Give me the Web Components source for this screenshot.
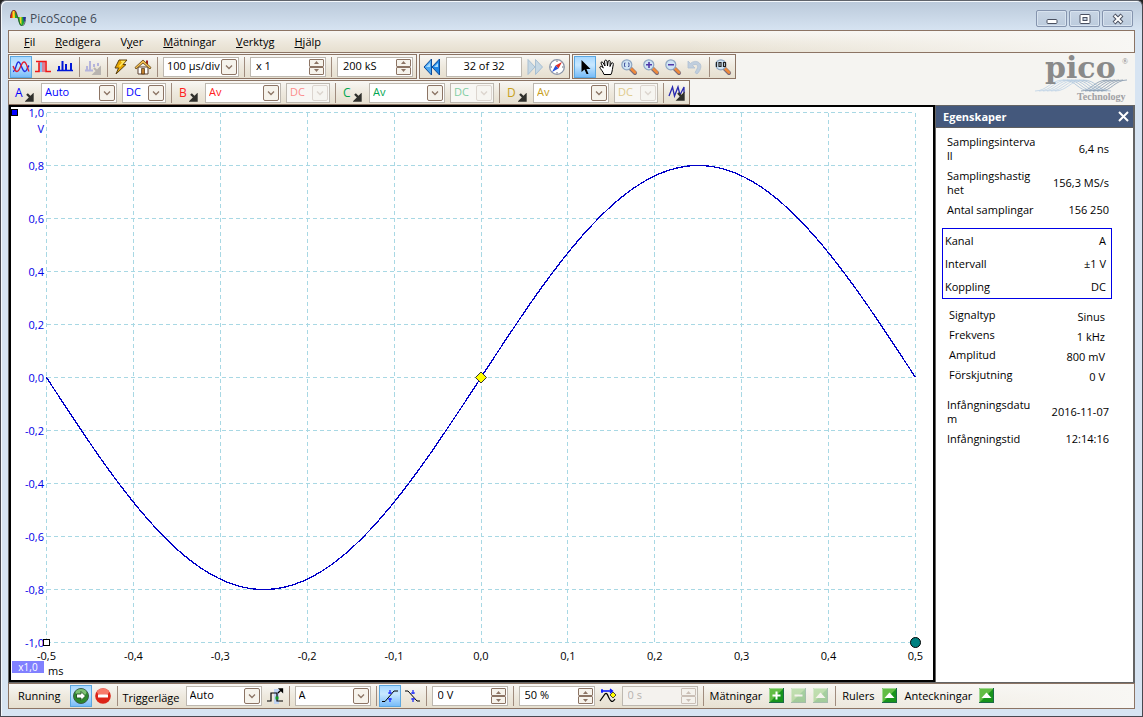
<!DOCTYPE html>
<html lang="sv">
<head>
<meta charset="utf-8">
<title>PicoScope 6</title>
<style>
html, body { height: 100%; }
body { margin: 0; overflow: hidden; background: #222; font: 11px/14px "Open Sans", "Noto Sans", sans-serif; color: #000; }
</style>
</head>
<body>
<scope-window>
  <title-bar slot="title">PicoScope 6</title-bar>
  <menu-bar slot="menu"></menu-bar>

  <tool-bar slot="row1">
    <icon-button icon="scope" label="Oscilloskop" selected></icon-button>
    <icon-button icon="pulse" label="Persistens"></icon-button>
    <icon-button icon="bars" label="Spektrum"></icon-button>
    <tool-sep></tool-sep>
    <icon-button icon="barsoff" label="Spektrumalternativ" disabled></icon-button>
    <tool-sep></tool-sep>
    <icon-button icon="bolt" label="Autokonfiguration"></icon-button>
    <icon-button icon="home" label="Hem"></icon-button>
    <tool-sep></tool-sep>
    <combo-box label="Tidbas" value="100 µs/div"></combo-box>
    <tool-sep></tool-sep>
    <spin-box label="Zoom" value="x 1"></spin-box>
    <tool-sep></tool-sep>
    <spin-box label="Samplingar" value="200 kS"></spin-box>
  </tool-bar>
  <tool-bar slot="row1">
    <icon-button icon="rewind" label="Föregående buffert"></icon-button>
    <spin-box label="Buffert" value="32 of 32" plain></spin-box>
    <icon-button icon="forward" label="Nästa buffert"></icon-button>
    <icon-button icon="compass" label="Buffertöversikt"></icon-button>
  </tool-bar>
  <tool-bar slot="row1">
    <icon-button icon="pointer" label="Markera" selected></icon-button>
    <icon-button icon="hand" label="Hand"></icon-button>
    <icon-button icon="zoomsel" label="Zooma markering"></icon-button>
    <icon-button icon="zoomin" label="Zooma in"></icon-button>
    <icon-button icon="zoomout" label="Zooma ut"></icon-button>
    <icon-button icon="undo" label="Ångra zoom" disabled></icon-button>
    <tool-sep></tool-sep>
    <icon-button icon="zoomfull" label="Full vy"></icon-button>
  </tool-bar>

  <tool-bar slot="row2">
    <channel-group name="A" color="#0000ff" range="Auto" coupling="DC"></channel-group>
    <tool-sep></tool-sep>
    <channel-group name="B" color="#ff2020" range="Av" coupling="DC" off></channel-group>
    <tool-sep></tool-sep>
    <channel-group name="C" color="#00a650" range="Av" coupling="DC" off></channel-group>
    <tool-sep></tool-sep>
    <channel-group name="D" color="#c8a020" range="Av" coupling="DC" off></channel-group>
    <tool-sep></tool-sep>
    <icon-button icon="generator" label="Signalgenerator"></icon-button>
  </tool-bar>

  <pico-logo slot="logo"></pico-logo>

  <scope-view slot="main"></scope-view>
  <side-panel slot="main" heading="Egenskaper">
    <prop-table kind="wrap" rows='[["Samplingsintervall","6,4 ns"],["Samplingshastighet","156,3 MS/s"],["Antal samplingar","156 250"]]'></prop-table>
    <prop-table kind="boxed" rows='[["Kanal","A"],["Intervall","±1 V"],["Koppling","DC"]]'></prop-table>
    <prop-table kind="signal" rows='[["Signaltyp","Sinus"],["Frekvens","1 kHz"],["Amplitud","800 mV"],["Förskjutning","0 V"]]'></prop-table>
    <prop-table kind="wrap" rows='[["Infångningsdatum","2016-11-07"],["Infångningstid","12:14:16"]]'></prop-table>
  </side-panel>

  <tool-bar slot="bottom" fill>
    <tool-label wide>Running</tool-label>
    <icon-button icon="run" label="Start" selected></icon-button>
    <icon-button icon="stop" label="Stopp"></icon-button>
    <tool-sep></tool-sep>
    <tool-label low>Triggerläge</tool-label>
    <combo-box label="Triggerläge" value="Auto"></combo-box>
    <icon-button icon="trigger" label="Avancerad trigger"></icon-button>
    <tool-sep></tool-sep>
    <combo-box label="Triggerkanal" value="A"></combo-box>
    <tool-sep></tool-sep>
    <icon-button icon="rising" label="Stigande flank" selected></icon-button>
    <icon-button icon="falling" label="Fallande flank"></icon-button>
    <tool-sep></tool-sep>
    <spin-box label="Tröskel" value="0 V"></spin-box>
    <tool-sep></tool-sep>
    <spin-box label="Pretrigger" value="50 %"></spin-box>
    <icon-button icon="delay" label="Fördröjning efter trigger"></icon-button>
    <spin-box label="Fördröjning" value="0 s" disabled></spin-box>
    <tool-sep></tool-sep>
    <tool-label>Mätningar</tool-label>
    <icon-button icon="plus" label="Lägg till mätning"></icon-button>
    <icon-button icon="minus" label="Ta bort mätning" disabled></icon-button>
    <icon-button icon="up" label="Redigera mätning" disabled></icon-button>
    <tool-sep></tool-sep>
    <tool-label>Rulers</tool-label>
    <icon-button icon="up" label="Visa linjaler"></icon-button>
    <tool-label>Anteckningar</tool-label>
    <icon-button icon="up" label="Visa anteckningar"></icon-button>
  </tool-bar>
</scope-window>

<script>
const ARROW = '<path d="M9 8l4 4M14.500 9.500v5h-5z" fill="#30302c" stroke="#30302c" stroke-width="2.400"/>';
const lens = inner => `<path d="M9.500 9.500l4.500 4.500" stroke="#7a6a78" stroke-width="4" stroke-linecap="round"/><path d="M10 9.500l4 4" stroke="#f08a3c" stroke-width="2.500" stroke-linecap="round"/><circle cx="5.800" cy="5.800" r="5" fill="#cfe4f4" stroke="#8fa6c2" stroke-width="1.200"/>${inner}`;
const green = inner => `<rect x=".5" y=".5" width="14" height="14" fill="#18941c" stroke="#1c6a48"/><path d="M1 14V1h13L1 14z" fill="#62bd45"/><path d="M.5 14V.5H14" fill="none" stroke="#9fd890"/>${inner}`;
const ICONS = {
  scope: '<path d="M0 12.500C3 12.500 3 3 5.500 3S9 12.500 12 12.500c2 0 2-4 4-6" fill="none" stroke="#2030e0" stroke-width="1.400"/><path d="M0 7c1 2 2 5.500 4 5.500C7 12.500 8 3 11 3s3 6 5 9.500" fill="none" stroke="#e02030" stroke-width="1.400"/>',
  pulse: '<path d="M4 3h3v10H4z" fill="#80c8f8"/><path d="M7 3h3v10H7z" fill="#d88098"/><path d="M0 12.500h4V3.500M1 2.500h10v10h5" fill="none" stroke="#f01818" stroke-width="1.600"/>',
  bars: '<path d="M0 11.500h16" stroke="#0018d8" stroke-width="1.500"/><path d="M2 12V7M5.500 12V2M9 12V5M14 12V4" stroke="#0018d8" stroke-width="2" fill="none"/>',
  barsoff: '<path d="M0 11.500h8M2 12V7M5 12V2M9 8V5M13 7V4" stroke="#b4b4dc" stroke-width="2" fill="none"/><path d="M9 9l4 4M15 9v6H9z" fill="#b8b4b0" stroke="#b8b4b0" stroke-width="2"/>',
  bolt: '<path d="M6 1h8l-4 4.500h3L3 15l2.500-6H2z" fill="#e8a800" stroke="#5a4010"/><path d="M8 2.500h3L6.500 7.500" fill="none" stroke="#ffe860" stroke-width="1.500"/>',
  home: '<path d="M11 1.500h2V6h-2z" fill="#a02020"/><path d="M3 8h10v7H3z" fill="#fff" stroke="#5a4030"/><path d="M0 8.500l8-7.500 8 7.500-1 1.500-7-6-7 6z" fill="#f4c050" stroke="#5a3c10" stroke-width=".8"/><path d="M6.500 9.500h3V15h-3z" fill="#c08030" stroke="#503010" stroke-width=".7"/>',
  rewind: '<path d="M7.500 0v16L0 8z" fill="#4ba6f0" stroke="#0c4c9c"/><path d="M15.500 0v16L8 8z" fill="#1f86e4" stroke="#0c4c9c"/><path d="M6 4v4H2zM14 4v4h-4z" fill="#a8dcff"/>',
  forward: '<path d="M1 .5v15L8 8zM8.500.5v15L15.500 8z" fill="#c6d8e4" stroke="#a8bfd2"/>',
  compass: '<circle cx="8" cy="8" r="7.300" fill="#fff" stroke="#8a94a8" stroke-width="1.300"/><path d="M13 3L9.500 9.500l-3-3z" fill="#e03028"/><path d="M3 13l3.500-6.500 3 3z" fill="#2850d8"/><path d="M8 1.500V3M8 13v1.500M1.500 8H3M13 8h1.500" stroke="#667"/>',
  pointer: '<path d="M4.500 1v12l3-2.500 2 4.500h2l-2-5h4z" fill="#000"/>',
  hand: '<path d="M5 15.500C4 12 1 10 .8 8c1-1.500 2.500 0 3.500 1L2 4C2 2.500 3.500 2.500 4.200 4L6 7 5.500 2C6 .8 7.500.8 8 2l.5 5 .7-5c1-1 2-.5 2 .7L11 7.500 12.500 4c1.500-.8 2 .5 1.800 1.500-.8 3-.8 7-2.300 10z" fill="#fff" stroke="#000"/>',
  zoomsel: lens('<path d="M4 3.500v1M4 7v1M7.500 3.500v1M7.500 7v1M3.500 4v3.500M8 4v3.500" stroke="#4858a0" fill="none"/>'),
  zoomin: lens('<path d="M3 5.800h6M6 3v6" stroke="#5038a8" stroke-width="1.600"/>'),
  zoomout: lens('<path d="M3 5.800h6" stroke="#5038a8" stroke-width="1.600"/>'),
  zoomfull: lens('<path d="M1.500 3v5M4 3.500h2v4H4zM8.500 3.500h2v4h-2z" fill="none" stroke="#222" stroke-width="1.200"/>'),
  undo: '<path d="M1 2v7h7L5.500 6.500C9 4 12 6 10 10l-2 3.500 2 1.500C15 10 15 5 11 3 8 1.500 5 3 3.500 4.500z" fill="#c0cede" stroke="#aebfd2" stroke-width=".8"/>',
  generator: '<path d="M0 11l3.500-9 2 9L9 2l2 8 4-8v6" fill="none" stroke="#2828b0" stroke-width="1.300"/>' + ARROW,
  run: '<circle cx="8" cy="8" r="7.500" fill="#2c8a2c" stroke="#3c5a4a"/><ellipse cx="8" cy="4.500" rx="5.500" ry="3.500" fill="#9cd890" opacity=".7"/><path d="M3.500 6H8V3.500L12.500 8 8 12.500V10H3.500z" fill="#fff" stroke="#205020" stroke-width=".9"/>',
  stop: '<circle cx="8" cy="8" r="7.800" fill="#dc2418"/><ellipse cx="8" cy="4" rx="6" ry="3.500" fill="#ff9080" opacity=".8"/><path d="M3 6.500h10v3H3z" fill="#fff"/>',
  trigger: '<path d="M7 1h5v15H7z" fill="#c0d4f4"/><path d="M0 13h4V5h6v8h6" fill="none" stroke="#000" stroke-width="1.200"/><path d="M11 5l3-3M12.500 1h3v3z" stroke="#000" stroke-width="1.300"/><path d="M8.500 8.500h3v3h-3z" fill="#10a020"/>',
  rising: '<path d="M0 13.500h3L12 3h4" fill="none" stroke="#000"/><path d="M8 2v4M8 10v4M6 5h4M6 11h4" stroke="#1020ff" stroke-width="1.200"/>',
  falling: '<path d="M1 3h3l9 10h3" fill="none" stroke="#000"/><path d="M9 2v4M9 10v4M7 5h4M7 11h4" stroke="#1020ff" stroke-width="1.200"/>',
  delay: '<path d="M0 13L5 6c2-2 3 2 4 4s3 6 6 1" fill="none" stroke="#000" stroke-width="1.200"/><path d="M1 3h11M2 1v4M10 1l2.500 2L10 5" fill="none" stroke="#0010ff" stroke-width="1.300"/><path d="M13 4l3 3-3 3-3-3z" fill="#ff0" stroke="#222" stroke-width=".8"/>',
  plus: green('<path d="M3.500 7.500h8M7.500 3.500v8" stroke="#fff" stroke-width="2"/>'),
  minus: green('<path d="M3.500 7.500h8" stroke="#fff" stroke-width="2"/>'),
  up: green('<path d="M2.500 10l5-5.500 5 5.500z" fill="#fff"/>')
};

/* Shared base: stamps styles and markup into an open shadow root. */
class Part extends HTMLElement {
  connectedCallback() {
    if (this.shadowRoot) return;
    const t = document.createElement('template');
    t.innerHTML = `<style>*{box-sizing:border-box}${this.css()}</style>${this.html()}`;
    this.attachShadow({ mode: 'open' }).append(t.content.cloneNode(true));
    this.ready();
  }
  at(n) { return this.getAttribute(n) || ''; }
  has(n) { return this.hasAttribute(n); }
  ready() {}
}
const BAR = 'linear-gradient(#f8f7f4,#eee9de 50%,#e6dfcf)';

customElements.define('scope-window', class extends Part {
  css() { return `
    :host{display:flex;flex-direction:column;box-sizing:border-box;height:100vh;padding:0 7px 7px;border:1px solid #484850;border-top-color:#60646c;border-radius:6px 6px 0 0;background:#d7e4f2 linear-gradient(#bac9da,#d7e4f2) 0 0/100% 30px no-repeat;box-shadow:inset 1px 1px #f4f8fc;overflow:hidden}
    .tools{flex:none;display:flex;justify-content:space-between;background:#f5f4f1;padding-top:1px}
    .rows{display:flex;flex-direction:column;gap:1px}
    .row{display:flex;gap:2px}
    main{flex:1 1 0;min-height:0;display:flex;border:solid #646464;border-width:0 2px 1px 1px;background:#fff}
    ::slotted(scope-view){flex:1}`; }
  html() { return `<slot name="title"></slot><slot name="menu"></slot>
    <div class="tools"><div class="rows"><div class="row"><slot name="row1"></slot></div><div class="row"><slot name="row2"></slot></div></div><slot name="logo"></slot></div>
    <main><slot name="main"></slot></main><slot name="bottom"></slot>`; }
});

customElements.define('title-bar', class extends Part {
  css() { return `
    :host{display:flex;flex:none;align-items:center;height:29px;padding-left:2px;color:#444c58;font-size:12px}
    .logo{width:16px;height:16px;margin:4px 4px 0 0}
    .t{flex:1;padding-top:6px}
    .c{display:flex;gap:2px;padding:6px 2px 0 0}
    button{width:31px;height:17px;padding:0;border:1px solid #8594ae;border-radius:2px;background:linear-gradient(#c8d5e4,#bccbdd);box-shadow:inset 0 0 0 1px #d8e3ef;display:grid;place-items:center}`; }
  html() {
    const b = (l, p) => `<button aria-label="${l}"><svg width="14" height="12" viewBox="0 0 14 12">${p}</svg></button>`;
    return `<svg class="logo" viewBox="0 0 16 16"><path d="M0 8c1-5 2-8 4-8s3 4 4 8z" fill="#e02818"/><path d="M2.500 8V1h2L5 8z" fill="#f4e020"/><path d="M5 8V1l3 7z" fill="#20a030"/><path d="M7.500 7h8c-1 5-2 9-4 9s-3-4-4-9z" fill="#20a838"/><path d="M9.500 7h2v8l-1.500-2z" fill="#f0d820"/><path d="M13 7h3l-2 6z" fill="#2030a0"/><path d="M0 8c1-5 2-8 4-8s3 5 4 8 2 8 4 8 3-3 4-8" fill="none" stroke="#333" stroke-width=".7"/></svg>
    <div class="t"><slot></slot></div><div class="c">
    ${b('Minimera', '<rect x="2" y="6.500" width="10" height="4" rx="1" fill="#fff" stroke="#4a5060"/>')}
    ${b('Maximera', '<rect x="2" y="1.500" width="10" height="9" rx="1" fill="#fff" stroke="#4a5060"/><rect x="5" y="4.500" width="4" height="3" fill="#c4d0e0" stroke="#4a5060"/>')}
    ${b('Stäng', '<path d="M3 2l8 8M11 2l-8 8" stroke="#4a5060" stroke-width="4"/><path d="M3.500 2.500l7 7M10.500 2.500l-7 7" stroke="#fff" stroke-width="2"/>')}</div>`; }
});

customElements.define('menu-bar', class extends Part {
  css() { return `
    :host{display:block;flex:none;border:1px solid #8c7464;background:linear-gradient(90deg,transparent 60%,#f8f7f4),${BAR}}
    nav{display:flex;gap:20px;height:21px;padding-left:15px}
    button{border:0;padding:0;background:none;font:inherit;font-size:11px;color:#000}`; }
  html() { return `<nav><button><u>F</u>il</button><button><u>R</u>edigera</button><button>V<u>y</u>er</button><button><u>M</u>ätningar</button><button><u>V</u>erktyg</button><button><u>H</u>jälp</button></nav>`; }
});

customElements.define('tool-bar', class extends Part {
  css() { return `
    :host{display:flex;flex:none;align-items:center;box-sizing:border-box;height:25px;padding:0 1px;border:1px solid #8c7464;background:${BAR}}
    :host([fill]){height:26px;background:linear-gradient(90deg,transparent 60%,#f8f7f4),${BAR}}`; }
  html() { return '<slot></slot>'; }
});

customElements.define('tool-sep', class extends Part {
  css() { return ':host{display:block;flex:none;width:1px;height:20px;margin:0 2px 0 3px;background:#a08c7e}'; }
  html() { return ''; }
});

customElements.define('tool-label', class extends Part {
  css() { return ':host{display:block;flex:none;padding:0 4px}:host([wide]){padding:0 9px 0 8px}:host([low]){padding:3px 3px 0 3px}'; }
  html() { return '<slot></slot>'; }
});

customElements.define('icon-button', class extends Part {
  css() { return `
    :host{display:block;flex:none}
    button{display:grid;place-items:center;width:22px;height:22px;padding:0;border:1px solid transparent;background:none}
    :host([selected]) button{border-color:#5ba7e0;background:linear-gradient(#a8d8ff,#c8e8ff 40%,#78bcf8)}
    :host([disabled]) svg{opacity:.35}
    :host([icon=undo]) svg,:host([icon=barsoff]) svg{opacity:1}
    svg{width:16px;height:16px;overflow:visible}`; }
  html() { return `<button aria-label="${this.at('label')}"${this.has('disabled') ? ' disabled' : ''}><svg viewBox="0 0 16 16">${ICONS[this.at('icon')]}</svg></button>`; }
});

customElements.define('combo-box', class extends Part {
  css() { return `
    :host{display:grid;flex:none;box-sizing:border-box;width:76px;height:20px;margin:0 2px 0 3px;border:1px solid #bdb8b0;background:#fff}
    :host([small]){width:44px}
    :host([disabled]){background:#f8f7f4}
    :host([disabled]) *{opacity:.5}
    select{grid-area:1/1;min-width:0;width:100%;height:18px;appearance:none;border:0;padding:0 0 2px 3px;background:none;font:inherit;font-size:11px;color:inherit;outline:0;opacity:1}
    svg{grid-area:1/1;justify-self:end;align-self:center;width:16px;height:16px;margin-right:1px;pointer-events:none}`; }
  html() { return `<select aria-label="${this.at('label')}"${this.has('disabled') ? ' disabled' : ''}><option>${this.at('value')}</option></select>
    <svg viewBox="0 0 16 16"><rect x=".5" y=".5" width="15" height="15" rx="1.500" fill="#f6f3ec" stroke="#8c7464"/><path d="M5 6.500l3 3 3-3" fill="none" stroke="#8c7464" stroke-width="1.300"/></svg>`; }
});

customElements.define('spin-box', class extends Part {
  css() { return `
    :host{display:flex;align-items:center;flex:none;box-sizing:border-box;width:76px;height:20px;margin:0 2px 0 3px;border:1px solid #bdb8b0;background:#fff}
    input{flex:1;min-width:0;height:18px;border:0;padding:0 0 3px 5px;background:none;font:inherit;font-size:11px;color:#000;outline:0}
    :host([plain]) input{text-align:center;padding:0 0 3px}
    :host([plain]) .b{display:none}
    :host([disabled]){background:#f4f2ee}
    :host([disabled]) input{color:#b8b4b0}
    :host([disabled]) .b{opacity:.4}
    .b{display:flex;flex-direction:column;margin-right:1px}
    button{display:grid;place-items:center;width:15px;height:8px;padding:0;border:1px solid #8c7464;border-radius:1px;background:#f6f3ec}
    svg{width:5px;height:3px}`; }
  html() {
    const d = this.has('disabled') ? ' disabled' : '';
    return `<input type="text" aria-label="${this.at('label')}" value="${this.at('value')}"${d}><div class="b">
    <button aria-label="Öka"${d}><svg viewBox="0 0 5 3"><path d="M0 3L2.500 0 5 3z" fill="#8c7464"/></svg></button>
    <button aria-label="Minska"${d}><svg viewBox="0 0 5 3"><path d="M0 0l2.500 3L5 0z" fill="#8c7464"/></svg></button></div>`; }
});

customElements.define('channel-group', class extends Part {
  css() { return `
    :host{display:flex;flex:none;align-items:center;color:${this.at('color')}}
    .ch{display:flex;align-items:center;gap:2px;width:28px;height:22px;padding:0 0 0 5px;border:0;background:none;font:inherit;font-size:12px;color:inherit}
    svg{width:9px;height:9px;margin-top:9px}`; }
  html() { return `<button class="ch">${this.at('name')}<svg viewBox="7 7 9 9">${ARROW}</svg></button>
    <combo-box label="Område ${this.at('name')}" value="${this.at('range')}"></combo-box>
    <combo-box small label="Koppling ${this.at('name')}" value="${this.at('coupling')}"${this.has('off') ? ' disabled' : ''}></combo-box>`; }
});

customElements.define('pico-logo', class extends Part {
  css() { return ':host{display:block;flex:none;padding:2px 4px 0 0}svg{display:block;width:96px;height:46px;overflow:visible}'; }
  html() {
    let w = '';
    for (let i = 0; i < 6; i++) {
      const x = i * 4;
      w += `<path d="M${x} 35c12 0 16-11 28-11" stroke="#bcd2e6"/><path d="M${28 + x} 24c14 0 14 11 28 11" stroke="#a4bcd4"/><path d="M${46 + x} 35c10 0 14-11 26-11" stroke="#7f93a8"/>`;
    }
    return `<svg viewBox="0 0 96 46" aria-label="pico Technology"><g fill="none" stroke-width=".8">${w}</g>
    <text x="10" y="22" font-family="DejaVu Serif" font-weight="bold" font-size="30" fill="#8a8a8a">pico</text>
    <text x="87" y="8" font-family="Liberation Serif" font-size="8" fill="#868686">®</text>
    <text x="42" y="44" font-family="Liberation Serif" font-weight="bold" font-size="10" fill="#a0a0a4">Technology</text></svg>`; }
});

customElements.define('scope-view', class extends Part {
  css() { return `
    :host{display:grid;grid-template:5px minmax(0,1fr) 37px/35px minmax(0,1fr) 17px;box-sizing:border-box;min-width:0;border:2px solid #000;background:#fff;position:relative}
    svg{grid-area:2/2;width:100%;height:100%;overflow:visible;display:block;min-height:0}
    .y,.x{display:flex;justify-content:space-between}
    .y{grid-area:2/1;flex-direction:column;color:#0000e8;padding-right:2px}
    .y span{display:flex;height:1px;align-items:center;justify-content:flex-end}
    .x{grid-area:3/2;padding-top:6px}
    .x span{display:flex;width:1px;height:14px;justify-content:center}
    .v{grid-area:2/1;justify-self:end;padding:10px 2px 0 0;color:#0000e8}
    .foot{grid-area:3/1/4/3;align-self:end;display:flex;gap:4px;padding-left:1px;height:25px}
    .zoom{width:32px;height:12px;margin-top:6px;background:#8080ff;color:#fff;text-align:center;font-size:10px;line-height:12px}
    .unit{padding-top:9px}
    .sq{position:absolute;left:0;top:2px;width:7px;height:7px;background:#00f;border:1px solid #000}`; }
  html() {
    const y = ['1,0','0,8','0,6','0,4','0,2','0,0','-0,2','-0,4','-0,6','-0,8','-1,0'];
    const x = ['-0,5','-0,4','-0,3','-0,2','-0,1','0,0','0,1','0,2','0,3','0,4','0,5'];
    const s = a => a.map(v => `<span>${v}</span>`).join('');
    return `<i class="sq"></i><div class="y">${s(y)}</div><div class="v">V</div><svg></svg><div class="x">${s(x)}</div><div class="foot"><div class="zoom">x1,0</div><div class="unit">ms</div></div>`; }
  ready() {
    this.draw();
    new ResizeObserver(() => this.draw()).observe(this);
  }
  draw() {
    const svg = this.shadowRoot.querySelector('svg'), r = svg.getBoundingClientRect();
    const w = r.width - 1, h = r.height - 1;
    if (w < 1 || h < 1) return;
    let grid = '', curve = '';
    for (let i = 0; i <= 10; i++) {
      const gx = Math.round(w * i / 10) + .5, gy = Math.round(h * i / 10) + .5;
      grid += `M${gx} .5V${h}M.5 ${gy}H${w}`;
    }
    for (let i = 0; i <= 300; i++) {
      const t = i / 300;
      curve += `${i ? 'L' : 'M'}${(t * w + .5).toFixed(1)} ${(h / 2 + .4 * h * Math.sin(t * 2 * Math.PI) + .5).toFixed(1)}`;
    }
    svg.innerHTML = `<path d="${grid}" stroke="#a8d8e4" stroke-dasharray="4 3" fill="none" shape-rendering="crispEdges"/>
      <path d="${curve}" stroke="#0000c8" stroke-width="1.300" fill="none" shape-rendering="crispEdges"/>
      <path d="M${w / 2 + .5} ${h / 2 - 5}l5.500 5.500-5.500 5.500-5.500-5.500z" fill="#ff0" stroke="#333"/>
      <rect x="-2.500" y="${h - 2.5}" width="6" height="6" fill="#fff" stroke="#000"/>
      <circle cx="${w + .5}" cy="${h + .5}" r="5" fill="#008080" stroke="#000"/>`;
  }
});

customElements.define('side-panel', class extends Part {
  css() { return `
    :host{display:block;flex:none;box-sizing:border-box;width:198px;border:solid #646464;border-width:1px 0 0 1px;background:#fff}
    header{display:flex;align-items:center;justify-content:space-between;height:22px;padding:0 4px 0 7px;background:#44587c;border-bottom:1px solid #606060;color:#fff;font-weight:bold}
    h2{margin:0;font:inherit;font-size:11px}
    button{padding:0;border:0;background:none;display:flex}
    .b{padding:4px 0 0 6px}`; }
  html() { return `<header><h2>${this.at('heading')}</h2><button aria-label="Stäng"><svg width="11" height="11" viewBox="0 0 11 11"><path d="M1 1l9 9M10 1l-9 9" stroke="#fff" stroke-width="2"/></svg></button></header><div class="b"><slot></slot></div>`; }
});

customElements.define('prop-table', class extends Part {
  css() { return `
    :host{display:block;width:170px;box-sizing:border-box}
    table{width:100%;border-collapse:collapse;table-layout:fixed}
    th,td{padding:0;font-weight:normal;vertical-align:middle}
    th{text-align:left;word-break:break-all;width:89px}
    td{text-align:right;white-space:nowrap}
    :host([kind=wrap]){padding:0 3px 0 5px}
    :host([kind=wrap]) th,:host([kind=wrap]) td{padding:3px 0}
    :host([kind=boxed]){border:1px solid #0000e8;margin:8px 0 6px;padding:0 5px 0 2px}
    :host([kind=boxed]) tr{height:23px}
    :host([kind=signal]){padding:0 7px;margin-bottom:10px}
    :host([kind=signal]) tr{height:20px}
    :host([kind=signal]) td{padding-top:4px}`; }
  html() { return `<table>${JSON.parse(this.at('rows')).map(([a, b]) => `<tr><th scope="row">${a}</th><td>${b}</td></tr>`).join('')}</table>`; }
});
</script>
</body>
</html>
